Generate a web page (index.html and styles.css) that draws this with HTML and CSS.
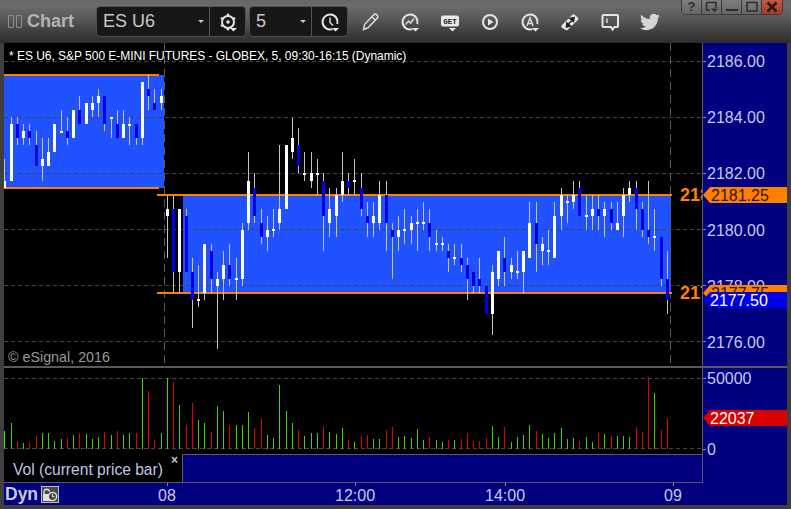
FILE: index.html
```html
<!DOCTYPE html>
<html lang="en">
<head>
<meta charset="utf-8">
<title>Chart</title>
<link rel="stylesheet" href="styles.css">
</head>
<body>
<div class="window">
  <header class="toolbar">
    <span class="tofu"></span><span class="tofu"></span>
    <span class="app-title">Chart</span>
    <div class="combo combo-symbol">
      <span class="combo-value">ES U6</span><span class="caret"></span>
      <button class="combo-btn">
        <svg class="ic" viewBox="0 0 20 20"><circle cx="10" cy="10" r="6" class="ic-thick"/><circle cx="10" cy="10" r="1.800" class="ic-fill"/><circle cx="10" cy="2.800" r="1.200" class="ic-fill"/><circle cx="3.800" cy="6.400" r="1.200" class="ic-fill"/><circle cx="16.200" cy="6.400" r="1.200" class="ic-fill"/><circle cx="3.800" cy="13.600" r="1.200" class="ic-fill"/><circle cx="10" cy="17.200" r="1.200" class="ic-fill"/><path d="M12 16h7l-3.500 3.500z" class="ic-fill"/></svg>
      </button>
    </div>
    <div class="combo combo-interval">
      <span class="combo-value">5</span><span class="caret"></span>
      <button class="combo-btn">
        <svg class="ic" viewBox="0 0 20 20"><path d="M12.500 17.100A7.500 7.500 0 1 1 17.300 12" class="ic-thick"/><path d="M10 5.500V10.500L13 13.500" class="ic-line"/><path d="M12 16h7l-3.500 3.500z" class="ic-fill"/></svg>
      </button>
    </div>
    <div class="tools">
      <button class="tool"><svg class="ic" viewBox="0 0 20 20"><path d="M3.500 17.500L4.500 12.500 13.500 3A2 2 0 0 1 17 6.500L8 15.800zM12 5L15.500 8.300" class="ic-line"/></svg></button>
      <button class="tool"><svg class="ic" viewBox="0 0 20 20"><path d="M12.500 17.100A7.500 7.500 0 1 1 17.300 12" class="ic-thick"/><path d="M5.500 12.500L8.500 9 10.500 11 14 6.500" class="ic-line"/><path d="M12 16h7l-3.500 3.500z" class="ic-fill"/></svg></button>
      <button class="tool"><svg class="ic" viewBox="0 0 20 20"><rect x="1" y="3.500" width="18" height="11" rx="2" class="ic-fill"/><text x="10" y="12.300" class="get-text">GET</text><path d="M9 16h7l-3.500 3.500z" class="ic-fill"/></svg></button>
      <button class="tool"><svg class="ic" viewBox="0 0 20 20"><circle cx="10" cy="10" r="7" class="ic-thick"/><path d="M8 6.500L13.500 10 8 13.500z" class="ic-fill"/></svg></button>
      <button class="tool"><svg class="ic" viewBox="0 0 20 20"><path d="M12.500 17.100A7.500 7.500 0 1 1 17.300 12" class="ic-thick"/><path d="M7 14L10 6 13 14M8 11.500H12" class="ic-line"/><path d="M12 16h7l-3.500 3.500z" class="ic-fill"/></svg></button>
      <button class="tool"><svg class="ic" viewBox="0 0 20 20"><path d="M1.500 13.500L12.500 2.700Q13.500 2 14.500 2.700L18 5.800Q18.700 7 18 7.800L7.500 18Q6.500 18.600 5.500 18L1.500 15.300Q1 14.300 1.500 13.500z" class="ic-fill"/><path d="M10 6.500L14 5.500 13.500 9.500zM10.500 14L6.500 15 7 11zM7.500 12.500L13 8" class="ic-dark"/></svg></button>
      <button class="tool"><svg class="ic" viewBox="0 0 20 20"><path d="M3.500 3H17Q18 3 18 4V14Q18 15 17 15H14.500L12.500 17.500 11 15H3.500Q2.500 15 2.500 14V4Q2.500 3 3.500 3z" class="ic-thick"/><path d="M7 6.500V11" class="ic-line"/></svg></button>
      <button class="tool"><svg class="ic" viewBox="0 0 24 24"><path d="M23.950 4.570a10 10 0 0 1-2.820.77 4.960 4.960 0 0 0 2.160-2.720c-.95.55-2 .95-3.120 1.180a4.920 4.920 0 0 0-8.380 4.480C7.690 8.090 4.070 6.130 1.640 3.160a4.820 4.820 0 0 0-.67 2.480c0 1.710.87 3.210 2.190 4.100a4.900 4.900 0 0 1-2.230-.62v.06a4.920 4.920 0 0 0 3.950 4.830 5 5 0 0 1-2.210.08 4.940 4.940 0 0 0 4.600 3.420A9.870 9.870 0 0 1 0 19.540a13.940 13.940 0 0 0 7.550 2.210c9.050 0 14-7.500 14-13.980 0-.21 0-.42-.01-.63a9.940 9.940 0 0 0 2.410-2.570z" class="ic-bird"/></svg></button>
    </div>
    <div class="win-controls">
      <button class="win-btn win-help">?</button>
      <button class="win-btn"><svg class="win-ic" viewBox="0 0 14 12"><path d="M1.500 1.500H11V7M1.500 1.500V9H5" class="win-stroke"/><path d="M6 7.500h7L9.500 11z" class="win-fill"/></svg></button>
      <button class="win-btn"><svg class="win-ic" viewBox="0 0 14 12"><path d="M1 9H13" class="win-thick"/></svg></button>
      <button class="win-btn"><svg class="win-ic" viewBox="0 0 14 12"><rect x="2" y="1.500" width="10" height="8.500" class="win-stroke"/></svg></button>
      <button class="win-btn win-close"><svg class="win-ic" viewBox="0 0 14 12"><path d="M2.500 1.500L11.500 10.500M11.500 1.500L2.500 10.500" class="win-x"/></svg></button>
    </div>
  </header>

  <main class="content">
    <div class="panes">
      <section class="price-pane">
        <svg class="plot" id="price-plot" viewBox="4 43 698 323" width="698" height="323">
          <rect x="4" y="75" width="160" height="113" class="range-box"/>
          <rect x="183" y="196" width="488" height="96" class="range-box"/>
          <g class="grid">
            <path d="M4 61.500H702M4 117.500H702M4 173.500H702M4 229.500H702M4 285.500H702M4 341.500H702"/>
          </g>
          <path d="M164.500 43V366M670.500 43V366" class="session"/>
          <rect x="4" y="74" width="155" height="2" class="range-line"/>
          <rect x="4" y="187" width="155" height="2" class="range-line"/>
          <rect x="157" y="194" width="515" height="2" class="range-line"/>
          <rect x="157" y="292" width="515" height="2" class="range-line"/>
        </svg>
        <div class="chart-title">* ES U6, S&amp;P 500 E-MINI FUTURES - GLOBEX, 5, 09:30-16:15 (Dynamic)</div>
        <div class="level level-high">2181.25</div>
        <div class="level level-low">2177.75</div>
        <div class="copyright">© eSignal, 2016</div>
      </section>
      <div class="separator"></div>
      <section class="vol-pane">
        <svg class="plot" id="vol-plot" viewBox="4 368 698 86" width="698" height="86">
          <path d="M4 378.500H702M4 448.500H702" class="grid-line"/>
        </svg>
      </section>
      <div class="legend">
        <div class="legend-label">
          <span class="legend-text">Vol (current price bar)</span>
          <span class="legend-close">×</span>
        </div>
        <div class="legend-fill"></div>
      </div>
    </div>
    <aside class="axes">
      <div class="price-axis">
        <div class="axis-label">2186.00</div>
        <div class="axis-label">2184.00</div>
        <div class="axis-label">2182.00</div>
        <div class="axis-label">2180.00</div>
        <div class="axis-label">2178.00</div>
        <div class="axis-label">2176.00</div>
        <div class="tag tag-orange tag-high">2181.25</div>
        <div class="tag tag-orange tag-low">2177.75</div>
        <div class="tag tag-blue tag-last">2177.50</div>
      </div>
      <div class="separator"></div>
      <div class="vol-axis">
        <div class="axis-label">50000</div>
        <div class="axis-label">0</div>
        <div class="tag tag-red tag-vol">22037</div>
      </div>
    </aside>
  </main>

  <footer class="time-axis">
    <span class="dyn">Dyn</span>
    <span class="lock"><svg class="lock-ic" viewBox="0 0 16 15"><path d="M2 7V4.500A2.800 2.800 0 0 1 7.500 4.500" class="lock-line"/><rect x="1" y="7" width="8" height="7" class="lock-body"/><circle cx="10.500" cy="9.500" r="4.200" class="lock-clock"/><path d="M10.500 7V9.700H12.800" class="lock-hand"/></svg></span>
    <span class="time-label" style="left:163px">08</span>
    <span class="time-label" style="left:351px">12:00</span>
    <span class="time-label" style="left:501px">14:00</span>
    <span class="time-label" style="left:669px">09</span>
  </footer>
</div>
<script src="chart.js"></script>
</body>
</html>
```
FILE: styles.css
```css
* { box-sizing: border-box; }
html, body { margin: 0; padding: 0; background: #3c3c3c; }
body { font-family: "Liberation Sans", Arial, sans-serif; overflow: hidden; }
button { font: inherit; border: 0; background: none; padding: 0; margin: 0; color: inherit; }

.window { width: 791px; height: 509px; display: flex; flex-direction: column; background: #3f3f3f; }

/* Toolbar */
.toolbar { height: 43px; flex: none; display: flex; align-items: center; padding-left: 8px; position: relative;
  background: linear-gradient(#666 0, #6c6c6c 6px, #565656 20px, #3a3a3a 34px, #2c2c2c 43px); }
.tofu { width: 6px; height: 13px; margin-right: 2px; border: 1px solid #8e8e8e; border-radius: 1px; }
.app-title { font-size: 18px; font-weight: bold; color: #b4b4b4; margin-left: 3px; width: 69px; }
.combo { height: 31px; display: flex; align-items: center; background: #171717; border: 1px solid #505050; border-radius: 4px; position: relative; }
.combo-symbol { width: 150px; margin-right: 3px; }
.combo-interval { width: 99px; }
.combo-value { font-size: 18px; color: #c9c9c9; padding-left: 6px; flex: 1; }
.caret { width: 0; height: 0; border-left: 3px solid transparent; border-right: 3px solid transparent; border-top: 3px solid #c8c8c8; margin-right: 5px; }
.combo-btn { width: 36px; height: 29px; border-left: 1px solid #555; display: flex; align-items: center; justify-content: center; }
.tools { display: flex; align-items: center; margin-left: 2px; }
.tool { width: 40px; height: 30px; display: flex; align-items: center; justify-content: center; }
.ic { width: 20px; height: 20px; display: block; }
.ic-thick { fill: none; stroke: #e4e4e4; stroke-width: 2; }
.ic-line { fill: none; stroke: #dcdcdc; stroke-width: 1.5; }
.ic-fill { fill: #e8e8e8; }
.ic-dark { fill: #222; stroke: #222; stroke-width: 1.6; }
.ic-bird { fill: #d4d4d4; }
.get-text { font-family: "Liberation Mono", monospace; font-weight: bold; font-size: 7.5px; fill: #222; text-anchor: middle; }

.win-controls { position: absolute; top: 0; left: 681px; display: flex; height: 15px; border: 1px solid #3a3a3a; border-top: 0; border-radius: 0 0 5px 5px; overflow: hidden; }
.win-btn { width: 20px; height: 14px; display: flex; align-items: center; justify-content: center; background: linear-gradient(#7e7e7e, #666); border-right: 1px solid #3a3a3a; color: #2c2c2c; font-size: 13px; font-weight: bold; line-height: 14px; }
.win-close { background: linear-gradient(#c05a48, #a83a28); border-right: 0; }
.win-ic { width: 14px; height: 12px; display: block; }
.win-stroke { fill: none; stroke: #2c2c2c; stroke-width: 1.500; }
.win-fill { fill: #2c2c2c; }
.win-thick { fill: none; stroke: #2c2c2c; stroke-width: 2; }
.win-x { fill: none; stroke: #2c1a16; stroke-width: 2.600; }

/* Panes */
.content { display: flex; padding-left: 4px; padding-right: 4px; flex: none; height: 440px; }
.panes { width: 699px; flex: none; border-right: 1px solid #5c5c5c; display: flex; flex-direction: column; }
.price-pane { height: 323px; position: relative; background: #000; overflow: hidden; flex: none; }
.vol-pane { height: 86px; background: #000; flex: none; overflow: hidden; }
.plot { display: block; shape-rendering: crispEdges; }
.separator { height: 2px; background: #5a5a5a; flex: none; }
.range-box { fill: #2053ff; }
.range-line { fill: #ff8000; }
.grid path, .grid-line { fill: none; stroke: #444; stroke-width: 1; stroke-dasharray: 4 3; }
.session { fill: none; stroke: #5a5a5a; stroke-width: 1; stroke-dasharray: 8 5; }
.wick { fill: #c4c4c4; }
.body-up { fill: #fff; }
.body-down { fill: #0000e6; }
.vol-up { fill: #3fd400; }
.vol-down { fill: #e00000; }

.chart-title { position: absolute; left: 5px; top: 6px; font-size: 12px; line-height: 14px; color: #fff; white-space: nowrap; letter-spacing: -0.03px; }
.copyright { position: absolute; left: 4px; top: 306px; font-size: 14.3px; line-height: 16px; color: #9a9a9a; }
.level { position: absolute; left: 676px; font-size: 18px; font-weight: bold; line-height: 18px; color: #ff8000; }
.level-high { top: 143px; }
.level-low { top: 241px; }

.legend { height: 29px; display: flex; flex: none; }
.legend-label { width: 179px; background: #000; border-right: 1px solid #5a5a5a; border-bottom: 1px solid #5a5a5a; position: relative; display: flex; align-items: center; padding-left: 9px; padding-top: 3px; }
.legend-text { font-size: 15.600px; color: #bcc8e0; white-space: nowrap; }
.legend-close { position: absolute; left: 167px; top: -1px; font-size: 12px; line-height: 14px; font-weight: bold; color: #c8c8c8; }
.legend-fill { flex: 1; background: #000080; border-top: 1px solid #5a5a5a; border-bottom: 1px solid #5a5a5a; }

/* Axes */
.axes { width: 84px; flex: none; background: #000080; display: flex; flex-direction: column; }
.price-axis { height: 323px; position: relative; display: flex; flex-direction: column; gap: 38.200px; padding-top: 10px; flex: none; }
.vol-axis { position: relative; display: flex; flex-direction: column; gap: 53px; padding-top: 2px; }
.axis-label { height: 18px; font-size: 16px; line-height: 18px; color: #c4c8ea; display: flex; align-items: center; gap: 1px; }
.axis-label::before { content: ""; width: 3px; height: 1px; background: #8a8aa0; margin-top: -2px; }
.tag { position: absolute; left: 0; width: 84px; height: 16px; font-size: 16px; line-height: 18px; padding-left: 8px;
  clip-path: polygon(0 50%, 7px 0, 100% 0, 100% 100%, 7px 100%); }
.tag-orange { background: #ff8000; color: #2a2000; }
.tag-blue { background: #0000e6; color: #fff; padding-left: 7px; }
.tag-red { background: #d80000; color: #fff; padding-left: 7px; }
.tag-high { top: 144px; }
.tag-low { top: 242px; }
.tag-last { top: 249px; }
.tag-vol { top: 42px; }

.time-axis { height: 22px; margin: 0 4px; background: #000080; position: relative; flex: none; display: flex; align-items: center; padding-top: 1px; }
.dyn { font-size: 17.500px; font-weight: bold; color: #c8c8d8; margin-left: 1px; }
.lock { width: 18px; height: 17px; margin-left: 3px; margin-top: -1px; border: 1px solid #bdbdbd; background: #4a4a4a; display: flex; align-items: center; justify-content: center; }
.lock-ic { width: 16px; height: 15px; display: block; }
.lock-line { fill: none; stroke: #e0e0e0; stroke-width: 1.300; }
.lock-body { fill: #e0e0e0; }
.lock-clock { fill: #4a4a4a; stroke: #e0e0e0; stroke-width: 1.200; }
.lock-hand { fill: none; stroke: #e0e0e0; stroke-width: 1; }
.time-label { position: absolute; top: 0; width: 0; height: 22px; display: flex; flex-direction: column; align-items: center; font-size: 16px; line-height: 18px; color: #c4c8ea; white-space: nowrap; gap: 1px; }
.time-label::before { content: ""; width: 1px; height: 3px; background: #8a8aa0; flex: none; }
```
FILE: chart.js
```js
// Each bar: [wickTop, wickBottom, bodyTop, bodyBottom, down?], in 1/3-pixel units from the group's top offset.
var groupA = [
  [267,354,333,354,0],[141,333,162,333,0],[141,225,162,204,1],[162,225,183,204,0],[162,225,183,204,1],
  [183,288,225,288,1],[204,333,267,288,0],[204,288,246,288,0],[162,246,162,246,0],[120,190,183,189,0],
  [141,225,183,204,1],[120,204,120,204,0],[78,162,120,162,1],[99,162,99,162,0],[78,141,99,120,0],
  [57,141,78,99,0],[78,183,78,162,1],[141,204,141,147,0],[120,204,162,204,1],[120,204,162,204,0],
  [141,225,162,168,0],[162,225,162,204,1],[36,225,36,204,0],[15,120,57,78,1],[57,120,99,120,1],
  [57,120,78,99,0]
];
var groupB = [
  [197,384,237,258,0],[197,489,237,426,1],[237,489,237,426,0],[237,426,258,426,1],[384,594,426,510,1],
  [405,531,507,513,0],[342,510,342,489,0],[342,489,363,447,1],[426,657,447,468,0],[363,510,405,447,0],
  [342,468,405,447,1],[384,510,444,450,0],[279,468,300,447,0],[66,300,153,279,0],[129,279,174,258,1],
  [237,342,279,321,1],[258,363,300,321,0],[237,321,297,303,0],[45,300,237,279,0],[45,237,45,237,0],
  [-36,87,24,66,0],[-6,129,45,108,1],[66,153,129,135,0],[66,174,129,153,0],[87,195,129,135,0],
  [129,363,153,258,1],[174,321,237,279,0],[174,321,195,258,0],[66,216,153,195,0],[129,195,153,174,1],
  [87,195,150,156,0],[129,258,174,237,1],[216,321,258,279,1],[216,321,258,279,0],[153,300,195,279,0],
  [153,363,195,279,1],[279,447,300,321,1],[258,363,300,321,0],[237,342,297,303,0],
  [258,342,279,300,0],[237,363,276,282,0],[216,300,276,282,0],[237,363,279,321,1],[300,363,339,345,0],
  [321,363,339,345,0],[342,426,363,384,1],[342,405,381,387,0],[342,426,384,405,1],[384,510,405,447,1],
  [426,489,426,468,1],[384,489,447,468,1],[468,552,468,552,1],[405,615,426,552,0],[363,468,363,447,0],
  [321,468,384,426,1],[384,447,405,426,0],[363,447,423,429,0],[363,489,363,426,0],[216,384,279,384,0],
  [216,426,279,342,1],[321,405,342,363,0],[300,405,360,366,0],[216,384,258,384,0],[174,300,195,258,0],
  [195,279,213,219,0],[153,237,195,216,0],[153,258,174,258,1],[195,300,255,261,0],[195,300,237,258,0],
  [195,300,237,258,1],[216,321,237,258,0],[216,300,237,279,1],[216,300,279,300,0],[174,321,195,258,0],
  [153,216,174,195,0],[153,300,174,237,1],[216,321,237,300,1],[153,342,300,321,1],[237,363,318,324,0],
  [321,468,321,447,1],[363,552,447,510,1]
];
var volTops = [
  213,189,243,249,246,228,219,219,243,237,234,225,219,222,237,231,216,225,213,225,219,219,54,93,240,219,
  54,66,135,195,129,180,189,216,138,153,195,195,195,156,204,177,225,234,75,153,189,210,
  228,219,219,198,216,222,204,240,246,228,225,237,237,210,201,231,228,234,207,240,231,240,246,240,240,
  237,219,243,243,234,198,231,201,246,231,225,195,213,222,234,219,
  204,237,234,243,231,246,219,222,228,228,228,231,201,216,51,99,210,174
];

var NS = "http://www.w3.org/2000/svg";

function addRect(parent, x, y, w, h, cls) {
  var r = document.createElementNS(NS, "rect");
  r.setAttribute("x", x);
  r.setAttribute("y", y);
  r.setAttribute("width", w);
  r.setAttribute("height", h);
  r.setAttribute("class", cls);
  parent.appendChild(r);
}

function barX(i) { return Math.round(4.4 + 6.25 * i); }

var bars = groupA.map(function (b) { return b.concat(70); })
  .concat(groupB.map(function (b) { return b.concat(130); }));

var pricePlot = document.getElementById("price-plot");
var volPlot = document.getElementById("vol-plot");

bars.forEach(function (b, i) {
  var off = b[5], x = barX(i);
  var wt = Math.round(off + b[0] / 3), wb = Math.round(off + b[1] / 3);
  var bt = Math.round(off + b[2] / 3), bb = Math.round(off + b[3] / 3);
  addRect(pricePlot, x, wt, 1, wb - wt, "wick");
  addRect(pricePlot, x - 1, bt, 3, bb - bt, b[4] ? "body-down" : "body-up");
  var top = Math.round(360 + volTops[i] / 3);
  addRect(volPlot, x, top, 1, 449 - top, b[4] ? "vol-down" : "vol-up");
});
```
